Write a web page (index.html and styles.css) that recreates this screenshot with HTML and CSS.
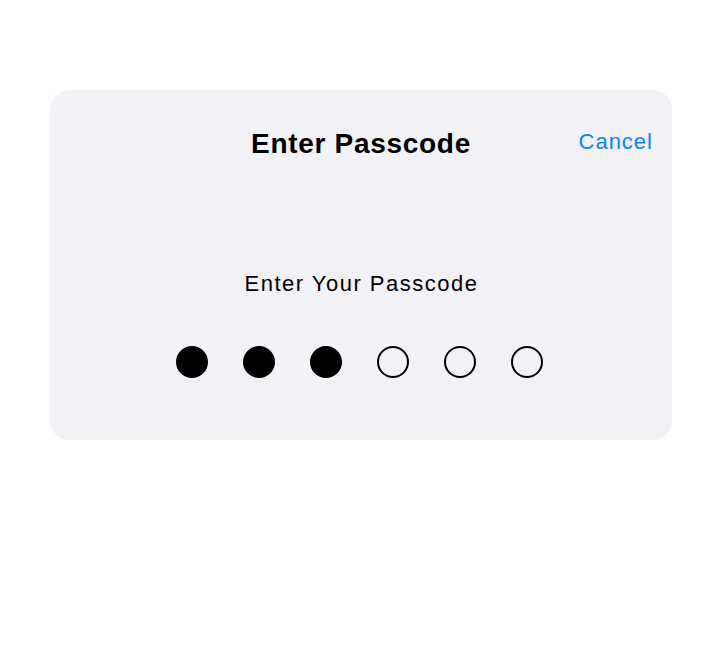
FILE: index.html
```html
<!DOCTYPE html>
<html>
<head>
<meta charset="utf-8">
<link rel="stylesheet" href="styles.css">
</head>
<body>
<div class="card">
  <div class="header">
    <span></span>
    <h1 class="title">Enter Passcode</h1>
    <a class="cancel">Cancel</a>
  </div>
  <div class="body">
    <p class="prompt">Enter Your Passcode</p>
    <div class="dots">
      <span class="dot filled"></span>
      <span class="dot filled"></span>
      <span class="dot filled"></span>
      <span class="dot"></span>
      <span class="dot"></span>
      <span class="dot"></span>
    </div>
  </div>
</div>
</body>
</html>
```
FILE: styles.css
```css
html, body {
  margin: 0;
  padding: 0;
  background: #ffffff;
}
body {
  font-family: "Liberation Sans", Arial, sans-serif;
  color: #000;
  padding: 90px 48px 0 50px;
}
.card {
  width: 622px;
  height: 350px;
  box-sizing: border-box;
  background: #f1f1f6;
  border-radius: 20px;
  padding: 0 20px;
}
.header {
  display: grid;
  grid-template-columns: 1fr auto 1fr;
  align-items: center;
  height: 108px;
}
.title {
  margin: 0;
  font-size: 28px;
  font-weight: bold;
  line-height: 1;
  letter-spacing: 0.7px;
}
.cancel {
  justify-self: end;
  color: #0a84ff;
  font-size: 22px;
  line-height: 1;
  margin-top: -4px;
  letter-spacing: 1px;
  margin-right: -1px;
}
.body {
  display: flex;
  flex-direction: column;
  align-items: center;
}
.prompt {
  margin: 75px 0 0 1px;
  font-size: 22px;
  line-height: 1;
  letter-spacing: 1.5px;
}
.dots {
  display: flex;
  gap: 35px;
  margin: 51px 3px 0 0;
}
.dot {
  width: 32px;
  height: 32px;
  box-sizing: border-box;
  border-radius: 50%;
  border: 2px solid #000;
}
.dot.filled {
  background: #000;
}
```
